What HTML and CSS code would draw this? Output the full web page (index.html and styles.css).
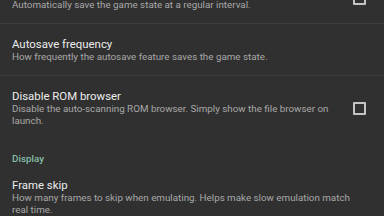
FILE: index.html
```html
<!DOCTYPE html>
<html lang="en">
<head>
    <meta charset="UTF-8">
    <meta name="viewport" content="width=device-width, initial-scale=1.0">
    <title>Settings</title>
    <link rel="stylesheet" href="styles.css">
</head>
<body>
    <div class="prefs">
        <div class="pref">
            <div class="pref-text">
                <div class="pref-title">Autosave</div>
                <div class="pref-summary">Automatically save the game state at a regular interval.</div>
            </div>
            <div class="checkbox"></div>
        </div>
        <div class="divider"></div>
        <div class="pref">
            <div class="pref-text">
                <div class="pref-title">Autosave frequency</div>
                <div class="pref-summary">How frequently the autosave feature saves the game state.</div>
            </div>
        </div>
        <div class="divider"></div>
        <div class="pref">
            <div class="pref-text">
                <div class="pref-title">Disable ROM browser</div>
                <div class="pref-summary">Disable the auto-scanning ROM browser. Simply show the file browser on launch.</div>
            </div>
            <div class="checkbox"></div>
        </div>

        <div class="category">Display</div>
        <div class="pref">
            <div class="pref-text">
                <div class="pref-title">Frame skip</div>
                <div class="pref-summary">How many frames to skip when emulating. Helps make slow emulation match real time.</div>
            </div>
        </div>
    </div>
</body>
</html>
```

FILE: styles.css
```css
body {
    margin: 0;
    background-color: #303030;
    font-family: Roboto, "Liberation Sans", sans-serif;
    overflow: hidden;
}
.prefs {
    margin-top: -28px;
}
.pref {
    display: flex;
    align-items: center;
    padding: 13px 12px 12px 12px;
}
.pref-text {
    flex: 1;
    padding-right: 12px;
}
.pref-title {
    font-size: 11.4px;
    line-height: 14px;
    color: #ececec;
}
.pref-summary {
    font-size: 9.8px;
    line-height: 12px;
    color: #a8a8a8;
}
.checkbox {
    flex: none;
    width: 9px;
    height: 9px;
    border: 2px solid #c4c4c4;
    border-radius: 1px;
    margin-left: 10px;
    margin-right: 6px;
}
.divider {
    height: 1px;
    background-color: #3e3e3e;
}
.category {
    padding: 14px 12px 0 12px;
    font-size: 9.8px;
    line-height: 12px;
    font-weight: 500;
    color: #85bfa6;
}
```
